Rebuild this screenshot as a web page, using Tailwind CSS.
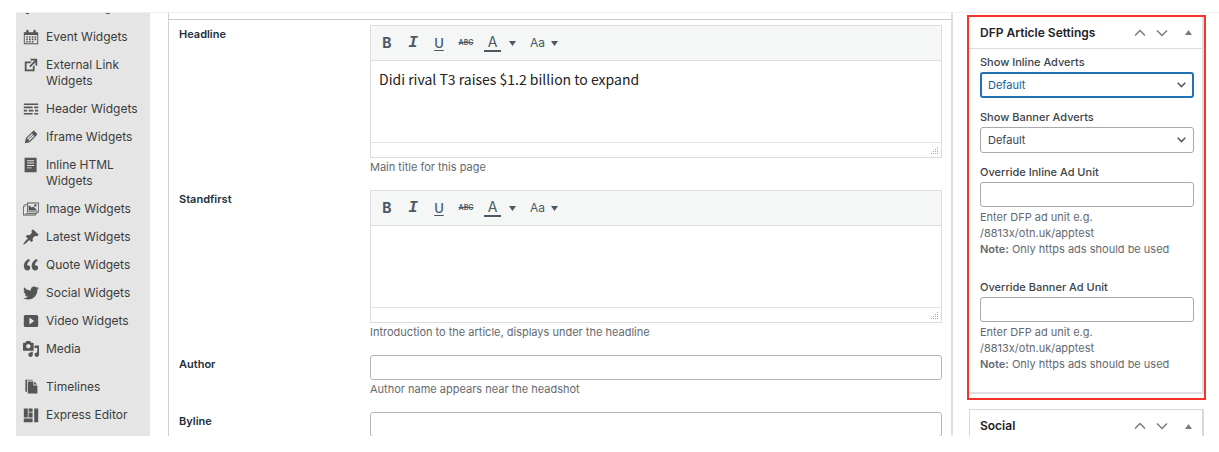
<!DOCTYPE html>
<html lang="en">
<head>
  <meta charset="UTF-8">
  <meta name="viewport" content="width=device-width, initial-scale=1.0">
  <title>Edit Article</title>
  <script src="https://cdn.jsdelivr.net/npm/@tailwindcss/browser@4"></script>
</head>
<body class="flex flex-col h-screen overflow-hidden bg-white pt-3 pb-4 pl-4 font-['Inter',sans-serif] text-[#3c434a]">
  <div class="flex flex-1 min-h-0 overflow-hidden border-t border-[#f0f0f0] pr-[13px]">

    <!-- Admin menu -->
    <nav class="w-[134px] shrink-0 bg-[#e5e5e5] text-xs leading-4 text-[#3c3c3c]">
      <ul class="-mt-5 pl-[7px]">
        <li><a href="#" class="flex gap-[7px] pt-1.5 pb-2">
          <svg class="size-4 shrink-0 fill-[#555]" viewBox="0 0 20 20"><path d="M6 3h12v11.500a2.500 2.500 0 1 1-2-2.450V7H8v9.500a2.500 2.500 0 1 1-2-2.450z"/></svg>
          Audio Widgets</a></li>
        <li><a href="#" class="flex gap-[7px] py-1.5">
          <svg class="size-4 shrink-0 fill-[#555]" viewBox="0 0 20 20"><path fill-rule="evenodd" d="M1 4h3V2.500a1.500 1.500 0 0 1 3 0V4h6V2.500a1.500 1.500 0 0 1 3 0V4h3v15H1zM2.200 7.500v10.300h15.600V7.500zM4 9h2v2H4zM7.500 9h2v2h-2zM11 9h2v2h-2zM14.500 9h2v2h-2zM4 12h2v2H4zM7.500 12h2v2h-2zM11 12h2v2h-2zM14.500 12h2v2h-2zM4 15h2v2H4zM7.500 15h2v2h-2zM11 15h2v2h-2z"/></svg>
          Event Widgets</a></li>
        <li><a href="#" class="flex gap-[7px] py-1.5">
          <svg class="size-4 shrink-0 fill-[#555]" viewBox="1 1 18 18"><path d="M9 3h8v8l-2-1V6.920l-5.600 5.590-1.410-1.410L14.080 5H10zm3 12v-3l2-2v7H3V6h8L9 8H5v7h7z"/></svg>
          External Link Widgets</a></li>
        <li><a href="#" class="flex gap-[7px] py-1.5">
          <svg class="size-4 shrink-0 fill-[#555]" viewBox="0 0 20 20"><path d="M1 3h18v2H1zM1 7h11v2H1zM14 7h5v2h-5zM1 11h4v2H1zM7 11h6v2H7zM15 11h4v2h-4zM1 15h11v2H1zM14 15h5v2h-5z"/></svg>
          Header Widgets</a></li>
        <li><a href="#" class="flex gap-[7px] py-1.5">
          <svg class="size-4 shrink-0 fill-[#555]" viewBox="1 1 18 18"><path d="M13.890 3.390l2.710 2.720c.46.46.42 1.240.03 1.640l-8.010 8.020-5.560 1.160 1.160-5.580s7.600-7.630 7.990-8.030c.39-.39 1.220-.39 1.680.07zm-2.730 2.790l-5.590 5.610 1.110 1.110 5.540-5.650zm-2.970 8.230l5.580-5.600-1.070-1.080-5.590 5.600z"/></svg>
          Iframe Widgets</a></li>
        <li><a href="#" class="flex gap-[7px] py-1.5">
          <svg class="size-4 shrink-0 fill-[#555]" viewBox="0 0 20 20"><path fill-rule="evenodd" d="M2 1h15v18H2zM5 4v1.200h9V4zM5 7v1.200h9V7zM5 10v1.200h9V10zM5 13v1.200h6V13z"/></svg>
          Inline HTML Widgets</a></li>
        <li><a href="#" class="flex gap-[7px] py-1.5">
          <svg class="size-4 shrink-0 fill-[#555]" viewBox="0 0 20 20"><path fill-rule="evenodd" d="M5 2h15v12h-2v2h-2v2H0V6h2V4h3zM6 3v10h13V3zM3 5v10h14v-1H5V5zM1 7v10h14v-1H3V7z"/><path d="M7 5l4 3 2-1 5 5H7z"/><circle cx="15.500" cy="5.500" r="1.500"/></svg>
          Image Widgets</a></li>
        <li><a href="#" class="flex gap-[7px] py-1.5">
          <svg class="size-4 shrink-0 fill-[#555]" viewBox="1 1 18 18"><path d="M10.440 3.020l1.820-1.820 6.360 6.350-1.830 1.820c-1.050-.68-2.480-.57-3.410.36l-.75.75c-.92.93-1.040 2.350-.35 3.410l-1.830 1.820-2.410-2.410-2.800 2.790c-.42.42-3.380 2.710-3.800 2.290s1.860-3.390 2.280-3.810l2.790-2.790L4.100 9.360l1.830-1.820c1.050.69 2.480.57 3.400-.36l.75-.75c.93-.92 1.050-2.350.36-3.410z"/></svg>
          Latest Widgets</a></li>
        <li><a href="#" class="flex gap-[7px] py-1.5">
          <svg class="size-4 shrink-0 fill-[#555]" viewBox="2 2 16.500 16.500"><path d="M9.490 13.220c0-.74-.2-1.380-.61-1.900-.62-.78-1.830-.88-2.530-.72-.29-1.650 1.110-3.750 2.920-4.650L7.880 4c-2.730 1.300-5.420 4.280-4.960 8.050C3.210 14.430 4.590 16 6.540 16c.85 0 1.560-.25 2.120-.75s.83-1.180.83-2.030zm8.050 0c0-.74-.2-1.380-.61-1.900-.63-.78-1.830-.88-2.530-.72-.29-1.650 1.110-3.750 2.920-4.650L15.930 4c-2.730 1.300-5.410 4.280-4.950 8.050.29 2.380 1.660 3.950 3.610 3.950.85 0 1.560-.25 2.120-.75s.83-1.180.83-2.030z"/></svg>
          Quote Widgets</a></li>
        <li><a href="#" class="flex gap-[7px] py-1.5">
          <svg class="size-4 shrink-0 fill-[#555]" viewBox="1 1 18 18"><path d="M18.940 4.460c-.49.73-1.110 1.380-1.830 1.900.01.15.01.31.01.47 0 4.850-3.690 10.440-10.430 10.440-2.070 0-4-.61-5.630-1.650.29.03.58.05.88.05 1.720 0 3.300-.59 4.550-1.570-1.600-.03-2.950-1.090-3.420-2.550.22.04.45.07.69.07.33 0 .66-.05.96-.13-1.670-.34-2.940-1.820-2.940-3.600v-.04c.5.27 1.060.44 1.660.46-.98-.66-1.630-1.780-1.630-3.060 0-.67.18-1.300.5-1.840 1.810 2.220 4.510 3.680 7.560 3.830-.06-.27-.1-.55-.1-.84 0-2.020 1.650-3.660 3.670-3.660 1.060 0 2.010.44 2.680 1.160.83-.17 1.620-.47 2.330-.86-.28.85-.86 1.570-1.620 2.020.75-.08 1.450-.28 2.110-.57z"/></svg>
          Social Widgets</a></li>
        <li><a href="#" class="flex gap-[7px] py-1.5">
          <svg class="size-4 shrink-0 fill-[#555]" viewBox="0 0 20 20"><path fill-rule="evenodd" d="M3 2.500h14a2 2 0 0 1 2 2v11a2 2 0 0 1-2 2H3a2 2 0 0 1-2-2v-11a2 2 0 0 1 2-2zM8 5.500v9l6-4.500z"/></svg>
          Video Widgets</a></li>
        <li><a href="#" class="flex gap-[7px] py-1.5">
          <svg class="size-4 shrink-0 fill-[#555]" viewBox="1 1 18 18"><path d="M13 11V4c0-.55-.45-1-1-1h-1.670L9 1H5L3.670 3H2c-.55 0-1 .45-1 1v7c0 .55.45 1 1 1h10c.55 0 1-.45 1-1zM7 4.500c1.380 0 2.500 1.120 2.500 2.500S8.380 9.500 7 9.500 4.500 8.380 4.500 7 5.620 4.500 7 4.500zM14 6h5v10.500c0 1.380-1.120 2.500-2.500 2.500S14 17.880 14 16.500s1.120-2.500 2.500-2.500c.17 0 .34.02.5.05V9h-3V6zm-4 8.050V13h2v3.500c0 1.380-1.120 2.500-2.500 2.500S7 17.880 7 16.500 8.120 14 9.500 14c.17 0 .34.02.5.05z"/></svg>
          Media</a></li>
        <li class="mt-2.5"><a href="#" class="flex gap-[7px] py-1.5">
          <svg class="size-4 shrink-0 fill-[#555]" viewBox="0 0 20 20"><path d="M6 3h7v5h5v10H6zM14 3l4 4h-4zM3 1h9v1H5v14H3z"/></svg>
          Timelines</a></li>
        <li><a href="#" class="flex gap-[7px] py-1.5">
          <svg class="size-4 shrink-0 fill-[#555]" viewBox="0 0 20 20"><path d="M1 2h5v11H1zM7 2h5v4H7zM7 7h5v6H7zM14 2h5v17h-5zM1 14.500h11V19H1z"/></svg>
          Express Editor</a></li>
      </ul>
    </nav>

    <!-- Article fields -->
    <main class="flex-1 min-w-0 ml-[18px] border-l border-r-2 border-l-[#d0d0d3] border-r-[#e0e0e2] text-[11px] leading-[18px]">
      <div class="h-[7px] border-b border-[#c8c9cc]"></div>
      <div class="flex flex-col gap-3.5 pl-2.5 pr-[9px] pt-[5px]">
        <div class="flex">
          <label for="headline" class="w-[191px] shrink-0 font-semibold text-[#23303c]">Headline</label>
          <div class="flex-1">
            <div class="border border-[#dcdcde]">
              <div class="flex items-center h-[35px] pl-[3px] bg-[#f5f7f7] border-b border-[#dcdcde] text-[#4c5863]">
                <button class="w-[26px] text-sm leading-4 font-bold" aria-label="Bold">B</button>
                <button class="w-[26px] font-['Liberation_Mono',monospace] text-base leading-4 font-bold italic" aria-label="Italic">I</button>
                <button class="w-[26px] text-[13px] leading-4 font-medium underline underline-offset-2" aria-label="Underline">U</button>
                <button class="w-7 text-[7px] font-semibold line-through" aria-label="Strikethrough">ABC</button>
                <button class="flex items-center gap-2 pl-1 pr-2" aria-label="Text color">
                  <span class="w-[17px] border-b-2 border-[#4c5863] text-sm leading-4">A</span>
                  <svg class="w-[7px] h-[5px] fill-[#4c5863]" viewBox="0 0 7 5"><path d="M0 0h7L3.500 5z"/></svg>
                </button>
                <button class="flex items-center gap-1.5 pl-1.5 text-xs" aria-label="Change case">Aa
                  <svg class="w-[7px] h-[5px] fill-[#4c5863]" viewBox="0 0 7 5"><path d="M0 0h7L3.500 5z"/></svg>
                </button>
              </div>
              <textarea id="headline" class="block w-full h-[81px] px-2 pt-2 resize-none outline-none font-['Noto_Sans_CJK_SC',sans-serif] text-sm leading-5 text-[#222]">Didi rival T3 raises $1.2 billion to expand</textarea>
              <div class="flex items-end justify-end h-[15px] pr-0.5 pb-0.5 border-t border-[#e4e4e6]">
                <svg class="size-2 fill-[#aaa]" viewBox="0 0 8 8"><path d="M6 0h1v1H6zM4 2h1v1H4zM6 2h1v1H6zM2 4h1v1H2zM4 4h1v1H4zM6 4h1v1H6zM0 6h1v1H0zM2 6h1v1H2zM4 6h1v1H4zM6 6h1v1H6z"/></svg>
              </div>
            </div>
            <p class="text-[#646970]">Main title for this page</p>
          </div>
        </div>

        <div class="flex">
          <label for="standfirst" class="w-[191px] shrink-0 font-semibold text-[#23303c]">Standfirst</label>
          <div class="flex-1">
            <div class="border border-[#dcdcde]">
              <div class="flex items-center h-[35px] pl-[3px] bg-[#f5f7f7] border-b border-[#dcdcde] text-[#4c5863]">
                <button class="w-[26px] text-sm leading-4 font-bold" aria-label="Bold">B</button>
                <button class="w-[26px] font-['Liberation_Mono',monospace] text-base leading-4 font-bold italic" aria-label="Italic">I</button>
                <button class="w-[26px] text-[13px] leading-4 font-medium underline underline-offset-2" aria-label="Underline">U</button>
                <button class="w-7 text-[7px] font-semibold line-through" aria-label="Strikethrough">ABC</button>
                <button class="flex items-center gap-2 pl-1 pr-2" aria-label="Text color">
                  <span class="w-[17px] border-b-2 border-[#4c5863] text-sm leading-4">A</span>
                  <svg class="w-[7px] h-[5px] fill-[#4c5863]" viewBox="0 0 7 5"><path d="M0 0h7L3.500 5z"/></svg>
                </button>
                <button class="flex items-center gap-1.5 pl-1.5 text-xs" aria-label="Change case">Aa
                  <svg class="w-[7px] h-[5px] fill-[#4c5863]" viewBox="0 0 7 5"><path d="M0 0h7L3.500 5z"/></svg>
                </button>
              </div>
              <textarea id="standfirst" class="block w-full h-[81px] px-2 pt-2 resize-none outline-none font-['Noto_Sans_CJK_SC',sans-serif] text-sm leading-5 text-[#222]"></textarea>
              <div class="flex items-end justify-end h-[15px] pr-0.5 pb-0.5 border-t border-[#e4e4e6]">
                <svg class="size-2 fill-[#aaa]" viewBox="0 0 8 8"><path d="M6 0h1v1H6zM4 2h1v1H4zM6 2h1v1H6zM2 4h1v1H2zM4 4h1v1H4zM6 4h1v1H6zM0 6h1v1H0zM2 6h1v1H2zM4 6h1v1H4zM6 6h1v1H6z"/></svg>
              </div>
            </div>
            <p class="text-[#646970]">Introduction to the article, displays under the headline</p>
          </div>
        </div>

        <div class="flex">
          <label for="author" class="w-[191px] shrink-0 font-semibold text-[#23303c]">Author</label>
          <div class="flex-1">
            <input id="author" type="text" class="block w-full h-[25px] px-2 border border-[#b4b5ba] rounded-[3px]">
            <p class="text-[#646970]">Author name appears near the headshot</p>
          </div>
        </div>

        <div class="flex">
          <label for="byline" class="w-[191px] shrink-0 font-semibold text-[#23303c]">Byline</label>
          <div class="flex-1">
            <input id="byline" type="text" class="block w-full h-[25px] px-2 border border-[#b4b5ba] rounded-[3px]">
          </div>
        </div>
      </div>
    </main>

    <!-- Meta boxes -->
    <aside class="w-[239px] shrink-0 ml-3.5 pt-0.5 text-[11px] leading-4">
      <div class="border-2 border-[#f8342a] pb-1">
        <section class="border-r-2 border-b-2 border-[#e0e0e2]">
          <header class="flex items-center h-8 pl-[11px] pr-2.5 border-b border-[#dcdcde]">
            <h2 class="flex-1 text-xs font-semibold text-[#1d2327]">DFP Article Settings</h2>
            <button aria-label="Move up"><svg class="w-3 h-2 fill-none stroke-[#787c82] stroke-[1.5]" viewBox="0 0 12 8"><path d="M1 6.500l5-5 5 5"/></svg></button>
            <button class="ml-2.5" aria-label="Move down"><svg class="w-3 h-2 fill-none stroke-[#787c82] stroke-[1.5]" viewBox="0 0 12 8"><path d="M1 1.500l5 5 5-5"/></svg></button>
            <button class="ml-[17px]" aria-label="Toggle panel"><svg class="w-[7px] h-[5px] fill-[#787c82]" viewBox="0 0 7 5"><path d="M0 5h7L3.500 0z"/></svg></button>
          </header>
          <div class="flex flex-col pl-[11px] pr-2 pt-[5px] pb-5">
            <label for="inline-adverts" class="mb-0.5 font-medium">Show Inline Adverts</label>
            <div class="grid items-center mb-[11px]">
              <select id="inline-adverts" class="col-start-1 row-start-1 appearance-none w-full h-[26px] px-1.5 border-2 border-[#2271b1] rounded-[3px] bg-white outline-none text-[#135e96]">
                <option>Default</option>
              </select>
              <svg class="col-start-1 row-start-1 justify-self-end mr-2 w-[9px] h-1.5 pointer-events-none fill-none stroke-[#50575e] stroke-[1.5]" viewBox="0 0 9 6"><path d="M.7.8l3.800 3.800L8.300.8"/></svg>
            </div>
            <label for="banner-adverts" class="mb-0.5 font-medium">Show Banner Adverts</label>
            <div class="grid items-center mb-[11px]">
              <select id="banner-adverts" class="col-start-1 row-start-1 appearance-none w-full h-[26px] px-[7px] border border-[#a7a9ae] rounded-[3px] bg-white">
                <option>Default</option>
              </select>
              <svg class="col-start-1 row-start-1 justify-self-end mr-2 w-[9px] h-1.5 pointer-events-none fill-none stroke-[#50575e] stroke-[1.5]" viewBox="0 0 9 6"><path d="M.7.8l3.800 3.800L8.300.8"/></svg>
            </div>
            <label for="inline-unit" class="mb-0.5 font-medium">Override Inline Ad Unit</label>
            <input id="inline-unit" type="text" class="h-[25px] px-2 border border-[#a7a9ae] rounded-[3px]">
            <p class="mt-0.5 mb-[22px] text-[#646970]">Enter DFP ad unit e.g.<br>/8813x/otn.uk/apptest<br><strong class="font-semibold">Note:</strong> Only https ads should be used</p>
            <label for="banner-unit" class="mb-0.5 font-medium">Override Banner Ad Unit</label>
            <input id="banner-unit" type="text" class="h-[25px] px-2 border border-[#a7a9ae] rounded-[3px]">
            <p class="mt-0.5 text-[#646970]">Enter DFP ad unit e.g.<br>/8813x/otn.uk/apptest<br><strong class="font-semibold">Note:</strong> Only https ads should be used</p>
          </div>
        </section>
      </div>
      <section class="mt-[9px] mx-0.5 border-l border-t border-r-2 border-[#d8d8da] pb-40">
        <header class="flex items-center h-8 pl-2.5 pr-2.5">
          <h2 class="flex-1 text-xs font-semibold text-[#1d2327]">Social</h2>
          <button aria-label="Move up"><svg class="w-3 h-2 fill-none stroke-[#787c82] stroke-[1.5]" viewBox="0 0 12 8"><path d="M1 6.500l5-5 5 5"/></svg></button>
          <button class="ml-2.5" aria-label="Move down"><svg class="w-3 h-2 fill-none stroke-[#787c82] stroke-[1.5]" viewBox="0 0 12 8"><path d="M1 1.500l5 5 5-5"/></svg></button>
          <button class="ml-[17px]" aria-label="Toggle panel"><svg class="w-[7px] h-[5px] fill-[#787c82]" viewBox="0 0 7 5"><path d="M0 5h7L3.500 0z"/></svg></button>
        </header>
      </section>
    </aside>
  </div>
</body>
</html>
